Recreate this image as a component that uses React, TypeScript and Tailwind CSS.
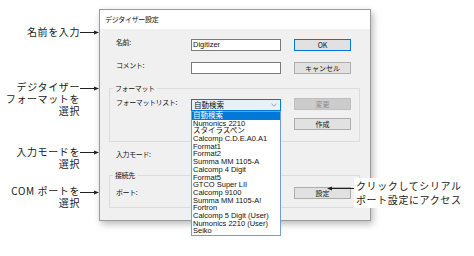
import React from "react";

const jp = "font-['Noto_Sans_CJK_JP',sans-serif]";
const latin = "font-['Liberation_Sans','Noto_Sans_CJK_JP',sans-serif]";

const listItems = [
  "自動検索",
  "Numonics 2210",
  "スタイラスペン",
  "Calcomp C.D.E.A0.A1",
  "Format1",
  "Format2",
  "Summa MM 1105-A",
  "Calcomp 4 Digit",
  "Format5",
  "GTCO Super LII",
  "Calcomp 9100",
  "Summa MM 1105-A!",
  "Fortron",
  "Calcomp 5 Digit (User)",
  "Numonics 2210 (User)",
  "Seiko",
];

function ArrowRight() {
  return (
    <svg width="19" height="5" viewBox="0 0 19 5" className="shrink-0">
      <line x1="0" y1="2.5" x2="15" y2="2.5" stroke="#222" strokeWidth="1" />
      <polygon points="14,0.5 19,2.5 14,4.5" fill="#222" />
    </svg>
  );
}

function Note({ lines, className, arrowTop }: { lines: string[]; className: string; arrowTop: string }) {
  return (
    <div className={`flex items-start ${className}`}>
      <div className={`w-[80px] text-right text-[10px] leading-[12px] tracking-[0.6px] text-[#1a1a1a] ${jp}`}>
        {lines.map((l) => (
          <div key={l} className="whitespace-nowrap">
            {l}
          </div>
        ))}
      </div>
      <div className={arrowTop}>
        <ArrowRight />
      </div>
    </div>
  );
}

function Btn({ label, primary, disabled }: { label: string; primary?: boolean; disabled?: boolean }) {
  const base = "w-[57px] h-[12px] flex items-center justify-center text-[7px] leading-none border";
  if (disabled) return <div className={`${base} bg-[#cccccc] border-[#bfbfbf] text-[#8a8a8a]`}>{label}</div>;
  return (
    <div className={`${base} bg-[#e1e1e1] text-[#111] ${primary ? "border-[#0078d7]" : "border-[#adadad]"}`}>
      {label}
    </div>
  );
}

function Label({ text }: { text: string }) {
  return <div className="w-[75px] text-[7px] leading-[12px] tracking-[-0.4px] text-[#111] -mt-[3px]">{text}</div>;
}

export default function App() {
  return (
    <div className={`relative w-[474px] h-[256px] bg-white overflow-hidden flex ${jp}`}>
      {/* left annotations */}
      <div className="w-[99px] shrink-0 flex flex-col">
        <Note lines={["名前を入力"]} className="mt-[26px]" arrowTop="mt-[4px]" />
        <Note lines={["デジタイザー", "フォーマットを", "選択"]} className="mt-[43px]" arrowTop="mt-[5px]" />
        <Note lines={["入力モードを", "選択"]} className="mt-[29px]" arrowTop="mt-[4px]" />
        <Note lines={["COM ポートを", "選択"]} className="mt-[15px]" arrowTop="mt-[5px]" />
      </div>

      {/* dialog */}
      <div className="relative mt-[9px] w-[272px] h-[212px] shrink-0 border border-[#9a9a9a] bg-[#f0f0f0] shadow-[2px_3px_7px_rgba(0,0,0,0.28)] flex flex-col">
        <div className="h-[19px] bg-white flex items-center pl-[5px] text-[7px] tracking-[-0.3px] text-[#111]">
          デジタイザー設定
        </div>

        <div className="flex flex-col pl-[16px]">
          <div className="mt-[10px] flex items-start">
            <Label text="名前:" />
            <div className={`w-[90px] h-[12px] bg-white border border-[#7a7a7a] pl-[1px] text-[7.5px] leading-[10px] text-[#111] ${latin}`}>
              Digitizer
            </div>
            <div className="ml-[13px]">
              <Btn label="OK" primary />
            </div>
          </div>
          <div className="mt-[11px] flex items-start">
            <Label text="コメント:" />
            <div className="w-[90px] h-[12px] bg-white border border-[#7a7a7a]" />
            <div className="ml-[13px]">
              <Btn label="キャンセル" />
            </div>
          </div>
        </div>

        {/* format group */}
        <div className="relative mt-[14px] ml-[9px] w-[251px] border border-[#dcdcdc] pl-[6px] pt-[10px] pb-[11px]">
          <div className="absolute -top-[6px] left-[3px] bg-[#f0f0f0] px-[2px] text-[7px] leading-[10px] tracking-[-0.4px] text-[#111]">
            フォーマット
          </div>
          <div className="flex items-start">
            <Label text="フォーマットリスト:" />
            <div className="w-[90px] h-[12px] bg-[#e5f1fb] border border-[#0078d7] flex items-center justify-between pl-[2px] pr-[3px] text-[7.5px] text-[#111]">
              <span>自動検索</span>
              <svg width="6" height="4" viewBox="0 0 6 4">
                <polyline points="0.5,0.8 3,3.2 5.5,0.8" fill="none" stroke="#888" strokeWidth="0.8" />
              </svg>
            </div>
            <div className="ml-[13px] -mt-[1px]">
              <Btn label="変更" disabled />
            </div>
          </div>
          <div className="mt-[7px] ml-[178px]">
            <Btn label="作成" />
          </div>
        </div>

        <div className="mt-[9px] pl-[16px] flex items-start">
          <Label text="入力モード:" />
        </div>

        {/* connection group */}
        <div className="relative mt-[15px] ml-[9px] w-[251px] border border-[#dcdcdc] pl-[6px] pt-[11px] pb-[8px]">
          <div className="absolute -top-[6px] left-[3px] bg-[#f0f0f0] px-[2px] text-[7px] leading-[10px] tracking-[-0.4px] text-[#111]">
            接続先
          </div>
          <div className="flex items-start">
            <div className="mt-[2px]">
              <Label text="ポート:" />
            </div>
            <div className="ml-[103px]">
              <Btn label="設定" />
            </div>
          </div>
        </div>

        {/* open dropdown list */}
        <div className={`absolute left-[91px] top-[101px] w-[90px] h-[125px] bg-white border border-[#6f9fd3] py-0 ${latin}`}>
          {listItems.map((item, i) => (
            <div
              key={item}
              className={`h-[7.7px] leading-[7.7px] pl-[1px] text-[7.5px] whitespace-nowrap ${
                i === 0 ? "bg-[#0078d7] text-white" : "text-[#111]"
              }`}
            >
              {item}
            </div>
          ))}
        </div>
      </div>

      {/* right callout */}
      <div className="absolute left-[327px] top-[186px]">
        <svg width="27" height="5" viewBox="0 0 27 5">
          <polygon points="0,2.5 5,0.5 5,4.5" fill="#222" />
          <line x1="4" y1="2.5" x2="27" y2="2.5" stroke="#222" strokeWidth="1" />
        </svg>
      </div>
      <div className="absolute left-[354px] top-[178px] bg-white pl-[2px] pr-[4px] py-[1px] text-[10px] leading-[14px] tracking-[0.6px] text-[#1a1a1a]">
        <div className="whitespace-nowrap">クリックしてシリアル</div>
        <div className="whitespace-nowrap">ポート設定にアクセス</div>
      </div>
    </div>
  );
}
